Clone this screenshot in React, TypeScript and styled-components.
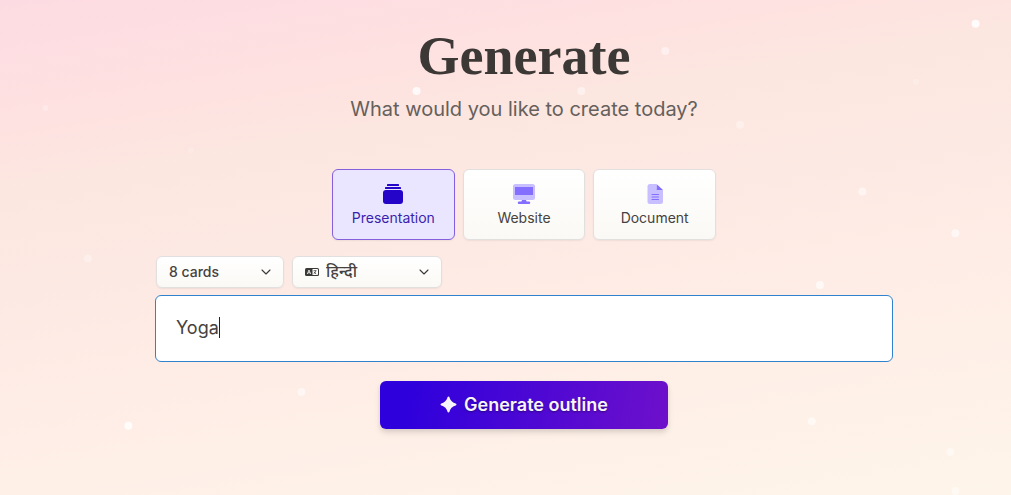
import React, { useState } from "react";
import styled, { createGlobalStyle, css } from "styled-components";

const GlobalStyle = createGlobalStyle`
  *, *::before, *::after { box-sizing: border-box; }
  html, body, #root { min-height: 100%; }
  body {
    margin: 0;
    font-family: Inter, "Noto Sans", sans-serif;
    color: #464240;
  }
  button, input, select { font: inherit; color: inherit; }
`;

const Page = styled.div`
  position: relative;
  min-height: 100vh;
  overflow: hidden;
  padding: 24px 0 24px 37px;
  background: linear-gradient(
    171deg,
    #fddbe2 0%,
    #fee1e1 18%,
    #fce7e0 30%,
    #fde9e3 45%,
    #feede6 64%,
    #fef1e8 82%,
    #fef5ea 100%
  );
`;

const Sparkles = styled.svg`
  position: absolute;
  inset: 0;
  width: 100%;
  height: 100%;
  fill: #fff;
  pointer-events: none;
`;

const Content = styled.main`
  position: relative;
  display: flex;
  flex-direction: column;
  align-items: center;
  width: 100%;
  max-width: 738px;
  margin: 0 auto;
`;

const Title = styled.h1`
  margin: 0;
  font: 700 54px/64px "Liberation Serif", serif;
  color: #3b3836;
`;

const Subtitle = styled.p`
  margin: 6px 0 0;
  font-size: 20px;
  line-height: 30px;
  color: #65605c;
`;

const surface = css`
  border: 1px solid #e2e0df;
  border-radius: 6px;
  background: linear-gradient(#fff, #faf9f5);
  box-shadow: 0 1px 2px rgba(0, 0, 0, 0.06);
`;

const Kinds = styled.div`
  display: grid;
  grid-template-columns: repeat(3, 1fr);
  gap: 8px;
  width: 100%;
  max-width: 384px;
  margin-top: 45px;
`;

const KindButton = styled.button<{ $active: boolean }>`
  ${surface}
  display: flex;
  flex-direction: column;
  align-items: center;
  gap: 3px;
  padding: 13px 0 11px;
  font-size: 14px;
  line-height: 20px;
  cursor: pointer;
  svg { width: 24px; height: 22px; }
  ${(p) =>
    p.$active &&
    css`
      border-color: #8560dc;
      background: #eae6ff;
      color: #3a1fae;
    `}
`;

const Filters = styled.div`
  display: flex;
  gap: 8px;
  width: 100%;
  margin-top: 16px;
  padding-left: 1px;
`;

const SelectBox = styled.label<{ $width: number }>`
  ${surface}
  display: flex;
  align-items: center;
  gap: 7px;
  width: ${(p) => p.$width}px;
  height: 32px;
  padding: 0 12px;
`;

const Select = styled.select<{ $size: number }>`
  appearance: none;
  flex: 1;
  min-width: 0;
  height: 28px;
  margin-bottom: 2px;
  padding: 0;
  border: 0;
  outline: 0;
  background: transparent;
  font-size: ${(p) => p.$size}px;
  font-weight: 500;
  cursor: pointer;
`;

const PromptBox = styled.label`
  display: flex;
  align-items: center;
  width: 100%;
  height: 67px;
  margin-top: 7px;
  padding: 0 20px 2px;
  border: 1px solid #3182ce;
  border-radius: 6px;
  background: #fff;
  cursor: text;
`;

const PromptInput = styled.input`
  field-sizing: content;
  max-width: 100%;
  padding: 0;
  border: 0;
  outline: 0;
  background: transparent;
  font-size: 18px;
  line-height: 24px;
  caret-color: transparent;
`;

const Caret = styled.span`
  width: 1px;
  height: 21px;
  background: #222;
`;

const Submit = styled.button`
  display: flex;
  align-items: center;
  justify-content: center;
  gap: 7px;
  width: 288px;
  height: 48px;
  margin-top: 19px;
  padding: 0 0 1px;
  border: 0;
  border-radius: 6px;
  background: linear-gradient(100deg, #2e00dc 10%, #6e10cb);
  box-shadow: 0 4px 6px rgba(0, 0, 0, 0.1), 0 2px 4px rgba(0, 0, 0, 0.06);
  color: #f8f4fc;
  font-size: 18px;
  font-weight: 600;
  text-shadow: 0 1px 2px rgba(0, 0, 0, 0.4);
  cursor: pointer;
`;

// x%, y%, radius, opacity
const sparkles = [
  [4.5, 21.8, 3, 0.25], [18.9, 30.3, 3, 0.15], [8.7, 52.2, 4, 0.3],
  [29.8, 79.2, 4, 0.5], [12.7, 86, 4, 0.8], [41.2, 18.4, 4, 0.8],
  [57.5, 18.4, 4, 0.45], [65.8, 10.3, 4, 0.45], [96.5, 4.8, 4, 0.85],
  [90.6, 16.5, 3, 0.2], [73.2, 25.2, 4, 0.35], [85.3, 38.7, 4, 0.5],
  [94.5, 47.1, 4, 0.6], [81.1, 57.6, 4, 0.65], [80.3, 85.1, 4, 0.5],
  [94, 91.3, 4, 0.45], [94.5, 99.2, 4, 0.45],
];

const Chevron = () => (
  <svg width="10" height="8" viewBox="0 0 10 8" fill="none" stroke="#3b3836" strokeWidth="1.1" strokeLinecap="round" strokeLinejoin="round" aria-hidden="true">
    <path d="M1 2l4 4 4-4" />
  </svg>
);

const PresentationIcon = () => (
  <svg viewBox="0 0 24 22" fill="#2404c8" aria-hidden="true">
    <rect x="6" y="1" width="12" height="2" rx="0.6" />
    <rect x="4" y="4" width="16" height="2" rx="0.6" />
    <rect x="2" y="7" width="20" height="14" rx="3" />
  </svg>
);

const WebsiteIcon = () => (
  <svg viewBox="0 0 24 22" aria-hidden="true">
    <rect x="1" y="1" width="22" height="16" rx="2.5" fill="#c7bfff" />
    <rect x="3" y="4" width="18" height="8" fill="#836eff" />
    <path d="M10 17h4l.6 1.5H17a1.2 1.2 0 0 1 0 2.5H7a1.2 1.2 0 0 1 0-2.5h2.4z" fill="#836eff" />
  </svg>
);

const DocumentIcon = () => (
  <svg viewBox="0 0 24 22" aria-hidden="true">
    <path d="M7 1h6v4.500A1.500 1.500 0 0 0 14.500 7H20v11.500a2.500 2.500 0 0 1-2.500 2.500H7a2.500 2.500 0 0 1-2.500-2.500v-15A2.500 2.500 0 0 1 7 1z" fill="#c7bfff" />
    <path d="M13.500 1L20 7h-6.500z" fill="#836eff" />
    <path d="M9 11.500h6.500M9 14h6.500M9 16.500h6.500" stroke="#836eff" strokeWidth="1" strokeLinecap="round" />
  </svg>
);

const LanguageIcon = () => (
  <svg width="14" height="10" viewBox="0 0 14 10" aria-hidden="true">
    <rect x="0" y="1" width="14" height="8" rx="1.5" fill="#3b3836" />
    <path d="M7.500 2h4.700a.8.8 0 0 1 .8.8v4.400a.8.8 0 0 1-.8.8H7.500z" fill="#fff" />
    <path d="M2.300 7L4 3l1.700 4M3 5.800h2" fill="none" stroke="#fff" strokeWidth="0.8" />
    <path d="M8.600 3.700h2.800M10.700 3.700c-.2 1.500-1 2.500-2 3M9 4.900c.5 1 1.300 1.600 2.200 1.900" fill="none" stroke="#3b3836" strokeWidth="0.8" />
  </svg>
);

const StarIcon = () => (
  <svg width="17" height="17" viewBox="0 0 17 17" fill="#f8f4fc" aria-hidden="true">
    <path d="M8.500.5c.5 0 .8.300 1 .8 1 3.300 2.400 4.900 6.200 6.200.500.200.8.500.8 1s-.3.800-.8 1c-3.800 1.300-5.200 2.900-6.200 6.200-.2.500-.5.800-1 .8s-.8-.3-1-.8c-1-3.300-2.400-4.900-6.200-6.200-.500-.2-.8-.5-.8-1s.3-.8.8-1c3.800-1.300 5.200-2.900 6.200-6.200.2-.5.500-.8 1-.8z" />
  </svg>
);

const kinds = [
  { name: "Presentation", Icon: PresentationIcon },
  { name: "Website", Icon: WebsiteIcon },
  { name: "Document", Icon: DocumentIcon },
];

export default function App() {
  const [kind, setKind] = useState("Presentation");
  const [prompt, setPrompt] = useState("Yoga");

  return (
    <>
      <GlobalStyle />
      <Page>
        <Sparkles aria-hidden="true">
          {sparkles.map(([x, y, r, opacity]) => (
            <circle key={`${x}-${y}`} cx={`${x}%`} cy={`${y}%`} r={r} opacity={opacity} />
          ))}
        </Sparkles>
        <Content>
          <Title>Generate</Title>
          <Subtitle>What would you like to create today?</Subtitle>
          <Kinds>
            {kinds.map(({ name, Icon }) => (
              <KindButton
                key={name}
                type="button"
                $active={kind === name}
                aria-pressed={kind === name}
                onClick={() => setKind(name)}
              >
                <Icon />
                {name}
              </KindButton>
            ))}
          </Kinds>
          <Filters>
            <SelectBox $width={128}>
              <Select $size={14} aria-label="Number of cards">
                <option>8 cards</option>
              </Select>
              <Chevron />
            </SelectBox>
            <SelectBox $width={150}>
              <LanguageIcon />
              <Select $size={16} aria-label="Language">
                <option lang="hi">हिन्दी</option>
              </Select>
              <Chevron />
            </SelectBox>
          </Filters>
          <PromptBox>
            <PromptInput
              type="text"
              aria-label="Topic"
              value={prompt}
              onChange={(e) => setPrompt(e.target.value)}
            />
            <Caret />
          </PromptBox>
          <Submit type="button">
            <StarIcon />
            Generate outline
          </Submit>
        </Content>
      </Page>
    </>
  );
}
